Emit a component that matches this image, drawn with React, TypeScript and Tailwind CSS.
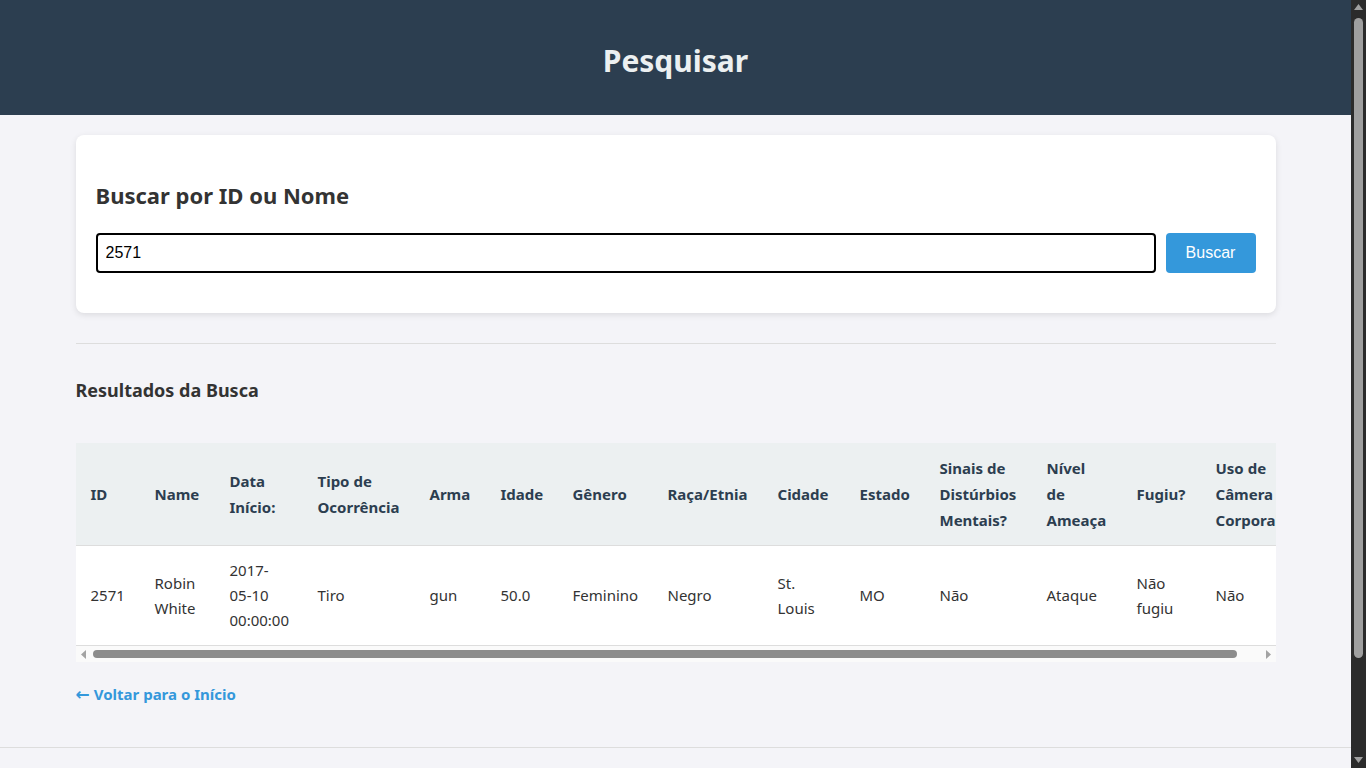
const columns = [
  { label: ['ID'], w: 'w-[64px]' },
  { label: ['Name'], w: 'w-[75px]' },
  { label: ['Data', 'Início:'], w: 'w-[88px]' },
  { label: ['Tipo de', 'Ocorrência'], w: 'w-[112px]' },
  { label: ['Arma'], w: 'w-[71px]' },
  { label: ['Idade'], w: 'w-[72px]' },
  { label: ['Gênero'], w: 'w-[95px]' },
  { label: ['Raça/Etnia'], w: 'w-[110px]' },
  { label: ['Cidade'], w: 'w-[82px]' },
  { label: ['Estado'], w: 'w-[80px]' },
  { label: ['Sinais de', 'Distúrbios', 'Mentais?'], w: 'w-[107px]' },
  { label: ['Nível', 'de', 'Ameaça'], w: 'w-[90px]' },
  { label: ['Fugiu?'], w: 'w-[79px]' },
  { label: ['Uso de', 'Câmera', 'Corporal'], w: 'w-[104px]' },
]

const row = [
  ['2571'],
  ['Robin', 'White'],
  ['2017-', '05-10', '00:00:00'],
  ['Tiro'],
  ['gun'],
  ['50.0'],
  ['Feminino'],
  ['Negro'],
  ['St.', 'Louis'],
  ['MO'],
  ['Não'],
  ['Ataque'],
  ['Não', 'fugiu'],
  ['Não'],
]

function Lines({ lines }: { lines: string[] }) {
  return (
    <>
      {lines.map((l, i) => (
        <span key={i} className="block whitespace-nowrap">{l}</span>
      ))}
    </>
  )
}

// horizontal scrollbar under the results table
function TableScrollbar() {
  return (
    <div className="h-[16px] bg-[#fafafa] flex items-center px-[4px] gap-[5px]">
      <svg width="8" height="9" viewBox="0 0 8 9"><path d="M6 0 L1 4.5 L6 9 Z" fill="#a3a3a3" /></svg>
      <div className="flex-1 flex items-center">
        <div className="h-[8px] w-[1144px] rounded-full bg-[#8c8c8c]" />
      </div>
      <svg width="8" height="9" viewBox="0 0 8 9"><path d="M2 0 L7 4.5 L2 9 Z" fill="#a3a3a3" /></svg>
    </div>
  )
}

// page scrollbar on the right edge
function PageScrollbar() {
  return (
    <div className="fixed right-0 top-0 h-screen w-[15px] bg-[#2b2b2b] flex flex-col items-center">
      <svg className="mt-[4px]" width="9" height="6" viewBox="0 0 9 6"><path d="M4.5 0 L9 6 L0 6 Z" fill="#a0a0a0" /></svg>
      <div className="mt-[8px] w-[9px] h-[640px] rounded-full bg-[#9f9f9f]" />
      <div className="flex-1" />
      <svg className="mb-[5px]" width="9" height="6" viewBox="0 0 9 6"><path d="M0 0 L9 0 L4.5 6 Z" fill="#a0a0a0" /></svg>
    </div>
  )
}

export default function App() {
  return (
    <div className="min-h-[885px] bg-[#f4f4f8] text-[#333]" style={{ fontFamily: '"Noto Sans", "Open Sans", sans-serif' }}>
      <div className="mr-[15px]">
        <header className="bg-[#2c3e50] h-[115px] flex items-center justify-center">
          <h1 className="text-[30px] font-bold text-[#ecf0f1] leading-none pt-[6px]">Pesquisar</h1>
        </header>

        <main className="max-w-[1200px] mx-auto pt-5">
          <section className="bg-white rounded-lg shadow-[0_2px_6px_rgba(0,0,0,0.1)] px-5 pt-5 pb-10">
            <h2 className="text-[22px] font-bold leading-[26px] mt-[27px] mb-[25px] text-[#333]">Buscar por ID ou Nome</h2>
            <div className="flex gap-[10px]">
              <input
                defaultValue="2571"
                className="flex-1 h-10 border-2 border-black rounded-[4px] px-[8px] text-[16px] text-black outline-none"
                style={{ fontFamily: '"Liberation Sans", Arial, sans-serif' }}
              />
              <button
                className="w-[90px] h-10 bg-[#3498db] text-white rounded-[4px] text-[16px]"
                style={{ fontFamily: '"Liberation Sans", Arial, sans-serif' }}
              >
                Buscar
              </button>
            </div>
          </section>

          <hr className="mt-[30px] border-0 border-t border-[#ddd]" />

          <h3 className="mt-[34px] text-[18px] font-bold leading-[24px] text-[#333]">Resultados da Busca</h3>

          <div className="mt-[41px]">
            <div className="overflow-hidden bg-white">
              <table className="table-fixed w-[1229px] border-collapse text-[15px] leading-[25px]">
                <thead>
                  <tr className="bg-[#ecf0f1] text-[#2c3e50] border-b border-[#ddd]">
                    {columns.map((c, i) => (
                      <th key={i} className={`${c.w} px-[15px] py-[12px] text-left font-bold align-middle leading-[26px]`}>
                        <Lines lines={c.label} />
                      </th>
                    ))}
                  </tr>
                </thead>
                <tbody>
                  <tr className="border-b border-[#ddd] text-[#333]">
                    {row.map((cell, i) => (
                      <td key={i} className="px-[15px] py-[12px] align-middle">
                        <Lines lines={cell} />
                      </td>
                    ))}
                  </tr>
                </tbody>
              </table>
            </div>
            <TableScrollbar />
          </div>

          <div className="mt-[20px]">
            <a href="#" className="text-[15px] font-bold text-[#3498db] inline-flex items-center gap-[4px]">
              <span className="text-[17px] leading-none" style={{ fontFamily: '"DejaVu Sans", sans-serif' }}>←</span>
              Voltar para o Início
            </a>
          </div>
        </main>

        <footer className="mt-[41px] border-t border-[#ddd] h-[138px]" />
      </div>
      <PageScrollbar />
    </div>
  )
}
